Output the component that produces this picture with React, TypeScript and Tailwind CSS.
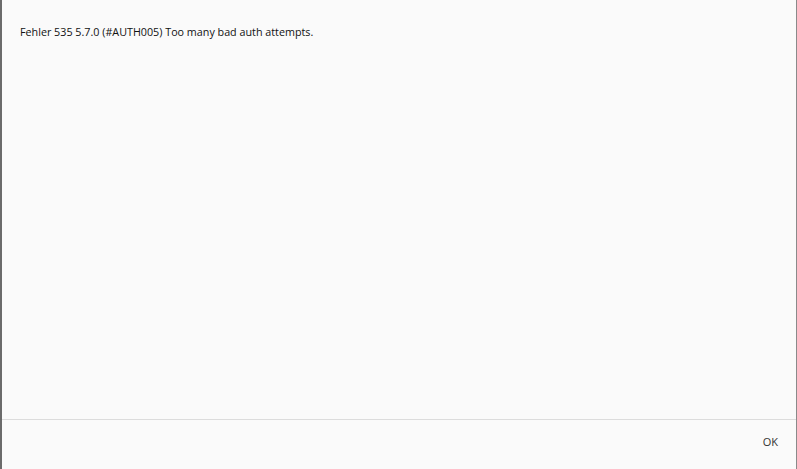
export default function App() {
  return (
    <div
      className="flex h-[469px] w-[797px] flex-col border-l-2 border-r border-l-[#6b6b6b] border-r-[#8a8a8a] bg-[#fafafa] text-[#111]"
      style={{ fontFamily: '"Open Sans", "DejaVu Sans", sans-serif' }}
    >
      {/* Message */}
      <div className="flex-1 px-[18px] pt-[24px]">
        <p className="text-[10.75px] leading-[16px]">
          Fehler 535 5.7.0 (#AUTH005) Too many bad auth attempts.
        </p>
      </div>

      {/* Footer */}
      <div className="flex h-[50px] items-center justify-end border-t border-[#dcdcdc] pr-[18px]">
        <button className="pb-[4px] text-[11px] text-[#333]">OK</button>
      </div>
    </div>
  );
}
